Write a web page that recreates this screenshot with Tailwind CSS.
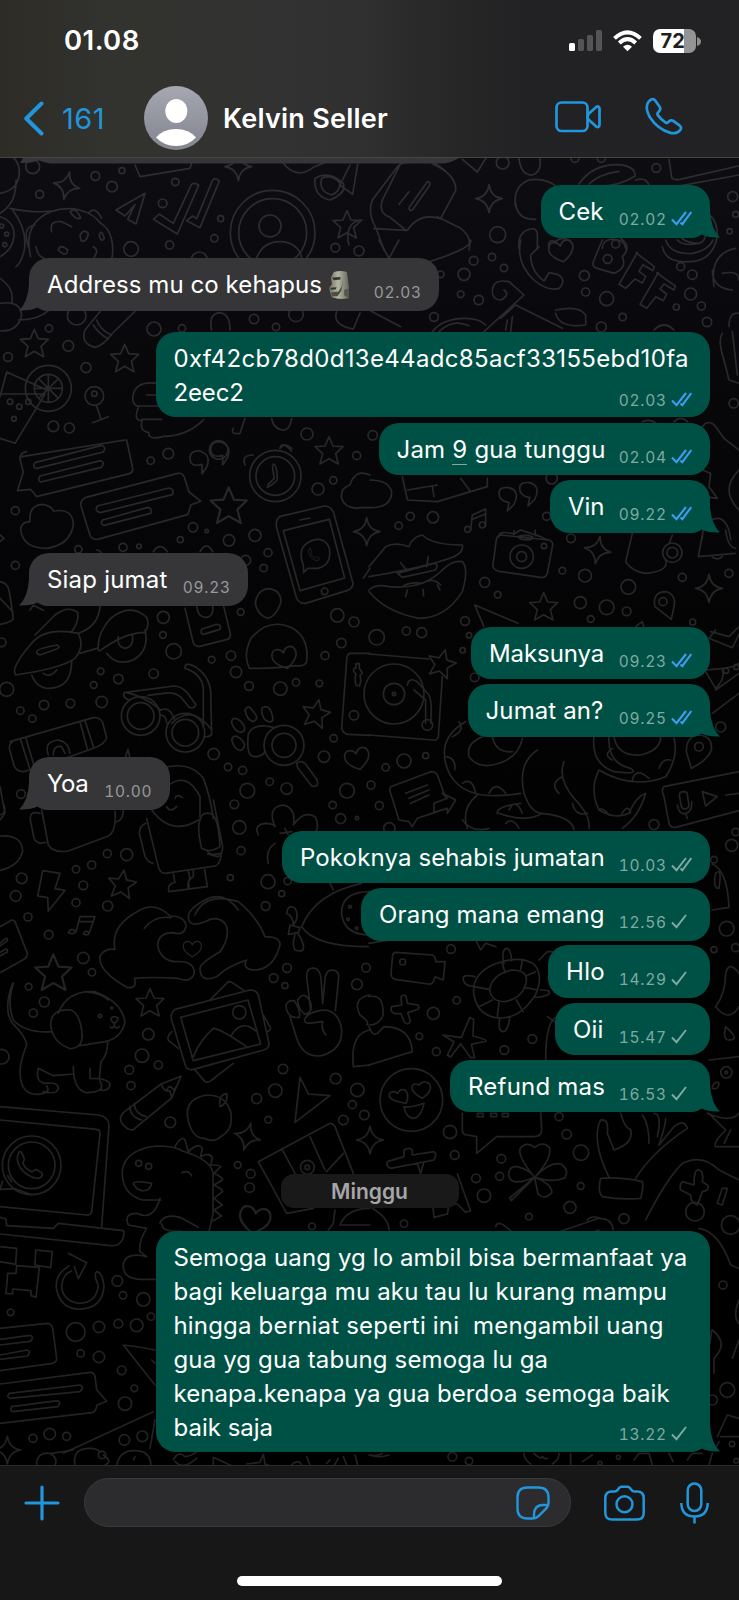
<!DOCTYPE html>
<html lang="id">
<head>
<meta charset="utf-8">
<title>Kelvin Seller</title>
<script src="https://cdn.jsdelivr.net/npm/@tailwindcss/browser@4"></script>
</head>
<body class="bg-black">
<div class="relative flex flex-col w-[739px] h-[1600px] overflow-hidden font-['Inter',sans-serif] bg-gradient-to-b from-[#111117] via-[#060608] via-30% to-black text-white">

<!-- doodle wallpaper -->
<svg class="absolute inset-0 w-[739px] h-[1600px] opacity-[.135]" viewBox="0 0 739 1600" fill="none" stroke="#fff" stroke-width="5" stroke-linecap="round" stroke-linejoin="round">
<defs>
<path id="st" d="M0-42 12-14 42-12 20 9 28 40 0 24-27 40-19 9-42-12-12-14z"/>
<path id="sp" d="M0-42Q5-5 40 0Q6 5 0 42Q-5 6-40 0Q-5-5 0-42z"/>
<path id="ht" d="M0 34C-28 18-40 4-36-14C-31-34-8-32 0-14C8-32 31-34 36-14C40 4 28 18 0 34z"/>
<path id="ph" d="M-32-38c-14 26 6 66 48 78c12 3 22-6 18-15l-16-11c-8 0-9 6-13 6c-14-6-22-16-26-28c0-5 6-6 5-14l-6-17c-3-6-8-5-10 1z"/>
</defs>
<g transform="translate(369 0) scale(.33333)">
<path d="M-60 735C-70 700-60 660-20 660M10 600l75-100q12-14 30-12l60-12q90 50 85 95l-45 85q-65-20-100 35l-100-5M10 600q-15 40 10 82l25 68M95 490l-55 110q-12 40 20 50l50 40M190 492q70 30 70 75M205 650l70 35q35 25 25 65M175 545q12 0 6 12l-50 72q-12 8-10-8zM120 575l-30 38M280 478l45 38 28-45M450 475q5 50 40 50 30-10 22-52M440 620q-10-60 40-80 50-8 85 22M440 610q5 50 60 48M450 745q-5-50 35-58 20-5 20 20v40M540 745q-5-30 20-20 20-20 45 0M630 552q40-60 120-58 50 5 48 35-50 30-110 30M660 552q30-30 90-38M800 540q30-10 40 15M900 478l8 55q5 8 25 5l175-40M920 560l190-35M880 740q10 50 80 45 70 0 85-75 0-50-25-65M930 700q10 30 60 30 20-5 20-30M700 745q0-25 30-28 35 0 40 28"/>
<use href="#sp" x="360" y="596"/>
</g>
<g transform="translate(0 150) scale(.33333)">
<path d="M0 130q60-10 58-70-5-30-20-38M0 190q50-30 48-100M30 175q70 15 125 8M0 200q45 15 42 60-5 40-42 60M38 180q45 60 35 120-10 40-25 50M92 320c-15-60 0-110 60-135c60-20 120-5 150 35c35 20 40 70 34 104M155 245q-8-35 30-30l30 15M210 185q20-15 32 20-15 5-32-20M265 190q20-25 40 15M85 290q-20-60 20-65M175 300q5-20 28 0-3 25-28 0M240 255q10-20 25-5-5 30-22 22zM298 255q5-20 15 10-10 15-15-10M108 290q5 30 25 35M280 290q20 10 0 35M435 130 348 180l27 18 30-34-22 44 25 14zM460 208l18-16 42 28 54-116q10-8 22 2l-64 146zM560 212l18-14 12 8 48-116q8-8 20 3l-58 140zM770 323q20-50 75-48 50 5 60 48M405 45l15 35 150-25 5-15M850 40q40 50 90 12l30-12M945 85q40-25 85 15 10 30-40 50-50-10-45-65M965 85q30-15 55 15 0 25-25 35-40-10-30-50M1050 45l-30 60 38 28 15-90M0 385q45 30 35 75M0 460q60-10 65 35-10 50-65 48M55 510q60 0 90-28M300 485l-45 55q-15 40 30 52 25-5 50-40l70-68M290 510q10 30 45 45M280 525q15 25 45 42M0 740l20-74 115 52M0 732h135L45 880 0 865M290 768l13 40M278 818l47-18M475 700q-75-10-77 45 0 20 18 25-18 42 10 42-8 32 20 35-2 25 45 12 70 0 120-50M415 768h65M425 808h60M440 735h40M635 540q-10-45 20-52 35 0 35 52M700 835q-10 20 20 15l15-45M815 805q5 35 40 35 15-5 20-35M1010 485q-15 40 50 52l20-48M840 895q15-20 35 0M145 675v80M105 715h80M118 688l55 55M173 688l-55 55"/>
<circle cx="818" cy="248" r="127"/><circle cx="818" cy="248" r="102"/><circle cx="145" cy="715" r="69"/><circle cx="145" cy="715" r="42"/>
<use href="#sp" x="200" y="107" transform="rotate(12 200 107)"/><use href="#sp" x="715" y="50"/><use href="#st" x="1041" y="224"/><use href="#st" x="103" y="580"/><use href="#st" x="374" y="625"/>
</g>
<g transform="translate(369 240) scale(.33333)">
<path d="M30 0l30 55 30-55M305 0q5 20-80 50l-45 15M455 0q-15 70 40 120 40 35 75 25 25-25-5-42l-25-5-15 25q-40-30-40-78l25-25M700 0l-25 60q-10 20 10 25l50 15q40-15 25-50 30-30-5-55M805 38l-55 95 20 12 28-28 22 12 10-20-20-15 12-20 30 18 4-12-40-30q-8-8-15-12zM868 98l-55 95 20 12 28-35 22 12 10-20-20-15 12-15 30 18 4-12-40-28q-8-8-15-12zM370 155q0-40 50-30l45 40L345 275M370 160q5 20 25 20 30-15 10-30M395 235l45-40 140 70M430 230l-5 45M415 240l-5 30M560 210q70-15 90 15v30q-80 10-90-35M190 275q30-40 100-40 40 0 60 20M210 275q40-40 90-18M0 210l95 50M1035 140q-15-100 65-115M1030 90q0 55 60 60M1060 100q50-10 50 20M1060 280q-15 20 5 80l15 60 30 10M1090 275l15 130M1080 260q0-45 30-40M100 710l15 70 90 5 150-45v-25M115 750l90-15M275 715l30 40M190 740l5 30M390 760q0-20 30-17 35 10 15 50l-20 20 5-25q-30-5-30-28M452 745q0-20 30-17 35 10 15 50l-20 20 5-25q-30-5-30-28M305 870l5-45 40-18 0 50M310 838l38-15M1000 560q20-25 40 0l25 35 45 35M1000 690l25 10-5 40 25 35-40-5M1110 690q-60 60 0 120M1000 895q0-60 50-60 30 10 35 65M390 890q0-20 45-8l20-12 60 20 20 10"/>
<circle cx="716" cy="57" r="13"/><circle cx="740" cy="12" r="12"/><circle cx="296" cy="868" r="9"/><circle cx="340" cy="855" r="9"/>
<path d="M890 0q15 45 80 40 50-10 62-40M925 0q20 20 60 10M820 545q25-10 40 5M915 545q20-20 40 0M855 270q30-30 60 0"/>
<use href="#ht" x="577" y="32" transform="rotate(-12 577 32)"/>
</g>
<g transform="translate(0 440) scale(.33333)">
<path d="M65 50l310-50M380 0l18 85q2 12-10 16L110 170l-18-22-40 4 18-55-10-40q0-20 20-22M105 68l200-52q15 5 5 20L108 86q-12-6-3-18M120 108l182-46q14 5 2 20l-182 44q-10-6-2-18M258 172l275-72q15-2 20 12l14 44 36 28-30 10-10 30-270 74q-18 3-24-15l-26-85q-3-18 15-26M292 198l215-54q18 4 10 20l-216 54q-18-4-9-20M308 240l136-38q14 4 8 18l-140 36q-14-4-4-16M90 245q-5-50 38-52 28 5 32 20 60-10 60 42-10 60-80 70-75 0-78-60 5-20 28-20M570 55q0-25 30-22 35 12 20 48l-14 20 0-28q-36 10-36-18M632 28q0-25 30-22 35 12 20 48l-14 20 0-28q-36 10-36-18M838 230l135-32q20 0 28 20l58 212q0 15-18 22l-125 38q-20 2-27-18l-60-212q-2-20 9-30M850 272l138-34 46 176-134 38zM900 240l30-6M910 375q-20-50 18-70 45-20 60 20 8 50-35 60l-30 0-12 13zM735 75q-12-30 25-30M840 25q5-25 35 8M820 72q10 0 12 42 3 10-30 28M818 75q-2 5 5 40l-20 20M1110 105q-45-20-60 30-30 10-25 40 10 35 60 28h25q65 0 65-48-10-35-65-35M0 285l12 10-12 10M0 425q25 5 28 30l12 80q-5 12-40 18M0 475l38 40M460 335q20-30 42 0M600 335q20-35 38 0M290 330q10 0 15 12M90 510l10-14 30 15M45 700q-10-20 50-90 40-50 140-30 20 40-10 75-40 30-180 50M110 635q0-8 60-20 15 5 0 12l-50 18q-10-2-10-10M105 585l60-60q40-30 68-8 5 30-20 60M235 580q60-20 65-80M240 640l50-15M295 632q-5-50 35-95 60-50 110-5 10 25-5 45-60 0-135 55M95 705q20 50 70 38 50-10 50-80M130 700q20 15 40-10M320 640q30 40 80 20 50-30 35-90M355 590q-5 30 20 35 28-5 22-40M555 505l24 100q3 15 20 14l80-20q13-2 12-18l-20-82M590 500q5 35 30 32 22-5 18-32M605 568l45-15q15 0 10 15l-50 15q-10 0-5-15M766 490q5-40 40-44 40 5 36 44-15 40-38 45-32-10-38-45M748 685q-20-40 5-90 55-65 125-30 50 30 42 100-5 15-35 12-60 10-137 8M372 758l150-20q20 0 40 20l25 35q0 12-18 10l-25-30q-20-20-60-12l-40 5M372 758q-5 15 15 22M380 758q50 10 100 50M478 812q20-12 35 5l10 20M480 825q20 0 20 25M555 682q0-15 25-5 45 25 52 75l3 130q-5 10-20 8M555 685q50 15 55 60v115M515 850q60-60 120 20M30 905l250-72q20-3 28 15l12 45q-5 20-40 32l-140 50-70 20q-20 0-28-18l-14-52q0-15 10-20M62 900l28 88M78 895l25 85M240 845l22 82M255 842l26 80M145 945q-15-40 30-45 30 5 35 40M160 945q0-30 25-25l10 20M377 950l7-22 5 22M695 850q0-25 25-8 25 25 5 35-20 0-30-27M735 810q10-20 25 5 20 20 0 30-20-5-25-35M785 805q20-15 30 15 10 30-10 25-20-5-20-40M695 900q5-20 25-5 25 20 5 35-20 5-30-30M820 862q-60-15-75 20-8 70 20 68 20 0 30-15M890 970q10-10 25 0l35 48q10 25-15 20l-42-55zM1110 640l-60 0q-10 5-10 20l-15 205q5 18 20 18l65 3M1068 735q-5-20 0-32-15-15 0-20v-12h10v15q15 15 2 20 5 20-2 32zM1090 415l20-30M480 985q90-25 130 30 20 50 30 120M500 1040q60-50 100 30v60M500 1100q10 20 30 0M525 1075q5-15 22-2M0 1040l15 80-15 20"/>
<circle cx="826" cy="108" r="77"/><circle cx="826" cy="108" r="58"/><circle cx="422" cy="828" r="58"/><circle cx="422" cy="828" r="40"/><circle cx="556" cy="878" r="58"/><circle cx="556" cy="878" r="40"/><circle cx="852" cy="916" r="60"/><circle cx="852" cy="916" r="36"/>
<use href="#ph" transform="translate(942 344) scale(.45)"/>
<use href="#st" x="987" y="32"/><use href="#st" transform="translate(686 197) scale(1.3)"/><use href="#st" x="948" y="820" transform="rotate(12 948 820)"/><use href="#sp" x="1100" y="275"/><use href="#ht" x="854" y="652" transform="rotate(-14 854 652)"/><use href="#ht" x="1072" y="955" transform="rotate(-14 1072 955)"/>
</g>
<g transform="translate(369 530) scale(.33333)">
<path d="M0 110l50-60q30-15 70 0 10-30 40-35 30 30 120 30 5 20-25 35-80 30-255 60M0 180q20-20 60-10 100 10 160-50 30-30 60-25 20 20 0 90-50 80-130 80-100-20-150-80M85 130l110-30q15 0 5 20l-100 22zM100 170q20-15 60-10 30-20 55 5M95 98l20 25M178 80l-5 30M115 180l-5 20M162 178l2 20M205 165l8 15M395 15l145 15q15 5 10 20l-15 80q-5 15-20 12l-125-18q-20-5-18-20l10-75q3-14 13-14M435 12v-10M500 18l-2-18M450 18q25-5 40 2 5 12-30 8-15-3-10-10M790 10l-20 85q20 30 60 35 70-5 60-40M910 15l-8 22M1000 15l-12 65 110-10M1070 0q5 50 30 55M1030 82q20 10 30-3M858 230q-10-45 35-45 30 10 22 45l-8 38zM345 290l-28-65 130 55M1040 300l-20 25 70 28 20-40M1025 305l55 15 30-30M800 290l20-15 5 15M0 372l180 15M220 440l-12 180q-3 12-15 10L0 615M115 465q5-25 30-10l35 40q10 20 5 85M135 480l35 30v70M1010 420q90-5 100-20M1010 425l30 50q30-30 20-55M1040 480l70-50M1030 550l80-60M230 700q-20-80 60-125M230 700q20 80 110 95 60 5 115-5M300 680q-10-40 40-60M300 680q30 40 90 20 60-20 70-75M370 620q10 50 60 45M250 620q40-20 20-45M232 680q30 5 25 40M280 760q30-20 40 30M360 790q20-40 50 0M505 660q-60 40-40 130 20 60 55 60 90 10 95 50M585 695q-20 50 30 110 50 50 45 90M580 740q-40 20-10 50M610 820q10 40 45 30M675 620q-10 80 60 105 80 10 50-10-70-15-65-95M690 720q100 60 200 20 40-60 25-115M730 655q-30 20 0 35M790 750q10-40 50-5M870 715q10-30 35-25M735 620q10 60 80 55 60-15 60-55M690 720q-30 60 0 120 50 30 90 10 20-50 50-60-20 70-70 105M690 840q10-10 30 15M755 858q20-40 30-10M325 795q-50 40-30 100M390 850q80 30 130 0M385 850q-5-20 70-30M420 840q20-40 40 10M410 880q20-20 40 15M952 665q0-50 40-50 40 5 35 45-10 30-60 55zM885 770l225-45M885 770q-10 10 0 30l15 80q5 15 20 12l190-50M932 800q-3-15 10-15 15 0 13 10l5 30q0 10-12 12-10 0-12-12zM925 825q5 30 25 25 20-5 18-35M950 850l5 15M1000 785l45 15-35 28zM1070 795l40-5M65 770l120-45q15 0 20 10l20 55M65 770q-5 10 0 20l25 80 30 5 10 15 15-25 60-20M110 790l65-25M120 805l60-25M125 820l55-25M195 820l40-15-15-15 40 20-25 40v-15l-40 12z"/>
<circle cx="458" cy="80" r="35"/><circle cx="458" cy="80" r="15"/><circle cx="525" cy="48" r="8"/><circle cx="910" cy="68" r="29"/><circle cx="910" cy="68" r="16"/><circle cx="75" cy="492" r="90"/><circle cx="75" cy="492" r="32"/><circle cx="75" cy="492" r="5"/><circle cx="175" cy="585" r="16"/>
<use href="#st" x="524" y="230"/><use href="#st" x="218" y="400" transform="rotate(15 218 400)"/><use href="#sp" x="686" y="60" transform="rotate(10 686 60)"/><use href="#sp" x="1020" y="175"/>
</g>
<g transform="translate(0 800) scale(.33333)">
<path d="M0 108q65-5 68 45-10 45-68 58M125 30l20 105q15 25 60 18l120-45q25-15 20-75M120 40q-35-10-28 25l10 50q10 20 35 12M370 30q0 30-20 35M0 45q20-5 12-30M455 30q60 80 140 30M440 55l35 145q5 20 20 20l150-22q15-5 18-30M437 70q-22 10-18 35l15 60q5 20 25 25M640 0l28 140q0 25-15 30l-30-8M600 60q5-25 30-20 25 5 30 100-30 20-55 5-15-60-5-85M620 150q10 20 40 10M520 222l5 25q-25 5-18 28l115-15-8-52M565 215l5 20q-10 15-5 28M580 210v20q-20 10-12 30M128 212l52 8-15 46 30 5-50 62-2-40-30-5zM205 398q10-18 22-3-8 10-22 3M250 402q8-16 18-2-6 8-18 2M228 395l12-45 45 0-18 50M236 365l42 0M0 380l35-20q10 0 12 10l35 90q0 12-10 18L0 518M0 430q25-25 22-8L0 438M0 458q25-20 22-2L0 468M345 448q-15-70 70-115 50-30 95 15 45 0 48 30-5 30-40 20-40 0-45 35 5 45 50 52 60-5 60 35-10 30-50 15-80-5-130 0 10 30-20 28-90-50-83-95 15-25 45-20M433 385q30-40 80-32M585 345q30-70 130-40 60 50 80 105 60 0 40 40-20 60-75 60-35-5-20-30-60 20-90 50-50 20-50-25 0-15 60-50 35-50 15-85-25-25-60-5-50 20-50-15 0-25 60-55 50-20 90 35M775 105q-15-30 20-35 25 0 30 10-25-60 25-65 40 10 30 60 30-45 65-25 15 30 0 50M805 190q-10-40 20-60M840 100l35-5M855 85l10 20M1000 270l-10-20M905 380q40-100 180-130M905 380q40 60 200 60M1110 275q-90 0-85 70 10 60 85 60M860 340q5-30 25-15 15 25-5 50 0-25-20-35M870 375l30 8-5 15-30 5zM885 405q-10 30 0 45 30 10 25-15-5-20-15-32M40 550q-20 60 0 110 35 40 115 35M38 550q-30 80 0 120 40 40 42 65-20 50-20 80 0 70 55 68 40-5 25-25M115 805q-10 40 20 45 40-5 40 15-5 20-45 10M115 805l45 22 62-5M220 800q0 70 40 78 60 0 40-35M270 805v30q60 0 60 20-5 20-30 15M323 725q0 40-20 60l-5 50M175 640q25-70 110-65 80 30 90 90-10 50-60 60l-75 12M255 575q50 5 70 25M152 675q0-50 60-45 30 10 35 80-5 40-40 35-50-20-55-70M333 655q10-10 22 0-3 10-12 15-10-5-10-15M343 670v10q-10 8-12 0M343 680q10 8 15 0M525 628l225-58q20 0 25 15l32 145q0 15-15 20L580 808q-20 5-25-15L515 660q-5-20 10-32M542 652l202-52 38 132-202 50zM580 770q20-50 60-85 20 0 100 55M695 705q30-50 75-10M630 600l55-55q10 0 15 5l30 20M790 645l22 40q0 5-12 12M515 695q-20 20-5 30l25 20M585 810l30 35q10 5 20-5l65-50M932 630l-12-100q0-30 25-25 15 5 18 30l5 75 8-80q5-25 30-18 12 8 10 20l-10 100M858 620q0-20 25-18 20 30 15 50-35 5-40-32M893 600q20-30 38 5 10 30-15 38-20-10-23-43M870 650l20 65q20 60 75 52 70-20 58-90-20-70-95-35-25 20-5 28l45-5q-5 25 10 40M483 852l60-23-28 65-115 95q-15 5-35-20-10-20 10-35zM485 855q5 20 25 18l5 20M403 910q0 30 35 40M390 920q0 30 35 40M500 870q10-20 20 0 10-10 12-15M660 915q-5-30 20-35 5 30-20 40M620 885q-60 10-58 60 10 70 50 70 30 15 50-5 40-20 30-75-15-50-72-50M900 832l-15 135 105-80-65-5zM0 920l295 25q30 5 32 30l-22 305M0 960l290 28q10 2 10 12l-25 235M0 1168l8-25M0 1168l45-2 50 18M35 1145l-12-18M367 1110q10-60 100-72 60 0 80 15 100 30 92 80v110l-12 50M367 1110q-5 70 60 90h55M400 1150q5-10 55 0-5 25-30 22-20-5-25-22M545 1118q20-10 30 10M525 1040q20-35 30-20l10 35q30-30 42-10l-5 25q30-15 35 5l-5 20q30 0 30 5l-20 20q30 15 25 20l-25 15q30 15 25 20l-25 20 25 20-25 15 22 18-25 15M775 1085l215-115q10 0 15 10l55 140M775 1085l85 155M845 1045l40 75M930 1010l45 100M1030 1060l-50 55M1110 585q-55 10-30 60 30 20 20 30M1110 690q-60 10-50 110l50-5"/>
<circle cx="300" cy="648" r="5"/><circle cx="335" cy="624" r="3"/><circle cx="718" cy="637" r="20"/><circle cx="95" cy="1096" r="88"/><circle cx="95" cy="1096" r="70"/><circle cx="416" cy="1090" r="9"/><circle cx="446" cy="1099" r="9"/><circle cx="922" cy="1102" r="21"/><circle cx="922" cy="1102" r="7"/>
<use href="#ph" transform="translate(90 1096) rotate(-4)"/>
<use href="#ht" transform="translate(577 445) scale(.75)"/><use href="#st" x="366" y="252" transform="rotate(8 366 252)"/><use href="#st" transform="translate(160 518) scale(1.3)"/><use href="#st" x="450" y="608"/><use href="#sp" x="742" y="1010" transform="rotate(15 742 1010)"/><use href="#sp" x="1110" y="1020"/>
</g>
<g transform="translate(369 820) scale(.33333)">
<path d="M280 0q30 40 80 25M0 370l70-12M320 360l15 30 15-20 30 10M80 397l110 8q10 3 10 20l28 0-5 55-25-10q-5 25-20 22L78 478q-12-3-12-18l5-55q2-8 9-8M315 525q-10-60 60-92 80-30 120 0 30 30 5 90-50 80-120 70-55-10-65-68M362 510q5-45 65-60 50 0 45 35-10 50-65 60-40 0-45-35M405 430q-10-40 8-45 12 0 15 38M318 470q-40-10-35 10 5 20 32 18M510 420l25-25h15M515 510q40 0 20 15-25 10-40 5M392 595q-5 40 10 40 15 0 20-42M400 430l8 28M460 420l-5 28M500 455l-28 12M505 510l-40-8M462 575l-20-35M385 590l5-45M330 560l40-20M315 500l45 8M68 560l30-5-2-25q10-10 15 0l5 20 30 5q10 10-5 15l-25 8 8 25q-5 15-18 3l-10-25-20 0q-15-10-8-21M222 645l55 8 25-60 12 5-2 50q40 10 40 15l-45 10 10 40-12 0-30-42-30 40-10-5 20-40zM0 530q45-10 42 55-10 30-42 30M0 620q10 30 25 20l20-20q80 0 85 75L0 735M105 860q15 5 60-10-10 45-35 45-20-5-25-35M62 820q-10 20 50 30 10-30-5-40-15-5-20 10-15-10-25 0M130 810q-5-25 20-15 10-15 30-5 15 20-20 45-20-10-30-25M280 880v50q0 15 15 15l28 5v50l60-50h110q25 0 25-20l-3-55M325 880h18v10h-18zM365 880h18v10h-18zM400 880h18v10h-18zM55 1025l50-15 0-20q15-10 25 0v15l65-10q10 5 0 25L65 1045q-15-5-10-20M145 1030l10 32M165 1025l-10 35M265 1062l40 110-15 5-25-25-25 0-5 30-40 10-5-50M530 720q0-130 40-130M535 590l30 20M695 900q25-5 20 40l20 50q60-20 50-60-20-10-30-50M695 900q-30 60 25 172M800 1075q50-80 155-150-10-30-40-5l-45 55q20-60 20-80M840 970q0-60-20-85M855 880q25 0 10 70M695 1075q60-5 125 10 5 10-5 50-60 5-115-5-15-15-5-55M830 1200q60-120 110-170 60-30 110 20l60 30M940 1085l35 10q0-50 15-45 15 5 10 35l15 10q10 15-15 20l-15 40q-20-5-20-30l-30-15q-5-15 5-25M1060 1105l15 0-15 50-15-5zM1030 270l50-8q-5-110-50-130M1040 160q20-20 10 45-20 0-10-45M1110 460q-30-40-40 0 0 60-30 100 40 50 70 0M1070 620q-10 40 10 40 25 0 10-20zM1020 720l90-10M1030 800q10-20 20-10 0 20-20 15M1015 880q70 30 95 0M1020 880l50 50q-40 40-30 50l70 0M1085 930l-20 40"/>
<path d="M497 1072q-50-60-44-85 18-25 44-5 25-20 44 0 10 30-44 90q45-48 80-40 25 20 10 42-35 15-90-2q50 20 52 45-20 25-42 5-5-25-10-50l-70 70-5-8 75-62q-70 30-78-5 0-30 25-27 40 10 53 32"/>
<circle cx="101" cy="426" r="9"/><circle cx="127" cy="840" r="94"/><circle cx="1072" cy="757" r="17"/><circle cx="1072" cy="757" r="4"/><circle cx="978" cy="1175" r="28"/>
</g>
<g transform="translate(0 1100) scale(.33333)">
<path d="M275 335q-3 12-15 10L0 320M0 352l18 5 2 20 140 8 15-15 195 22q5 5-2 25-10 22-35 20L0 402M0 440l50 5-3 48-47-8M107 450l50 5-5 48-47-8zM50 497l68 5-10 90-15-5 0-15-55-5v15l-20-2 5-60 25 0zM205 460l55 28-25 48-12-36M207 498q-45 25-37 72 15 62 77 57 60-5 65-67-5-45-22-45-10 10 5 40-5 55-60 55-50-10-50-55 5-35 30-42M0 685l140-15q15 0 18 15l12 90q0 12-12 15L0 812M0 718l90-12q15 5 0 18L0 735M0 765l82-15q12 5 0 18L0 778M0 852l270-35q12 0 15 12l5 40 30 35-30 12q0 18-15 22L0 970M28 880l212-25q15 5 0 20L30 895q-12-5-2-15M35 920l138-18q12 5 0 18L38 935q-10-5-3-15M480 295q-20 70-70 45-40 0-25 35l55 10q-25 40-20 70l20 15q-60-15-70 20-5 45 50 48l45 0M480 370q10-30 60-18l55 30M485 372q0 25 60 22M370 735q50 5 95 15M370 735l95 120M455 780l10 10M190 1060l270-125M465 960l-15 85M860 340l80-15M1020 375q20-50 90-50M1005 330l-5 40-15 20M1020 375h90"/>
<use href="#ht" transform="translate(764 358) rotate(10) scale(1.25)"/>
<use href="#sp" x="22" y="1050"/>
</g>
<g transform="translate(369 1160) scale(.33333)">
<path d="M10 145q50 30 50 65M380 200q5-20 30 0l15 12M570 215l120-40q40 0 42 35M655 180q10-15 40-5M675 215l15-5M990 205q60 10 95 110l25 10M1110 420q-20 50 0 70M1030 510q50 40 5 85l0 45M1110 540l-20 55M1028 510l-5 40M1045 830l30-65 35 10M1055 830h55M1025 870q20-10 25-25M0 885q30 10 60 0"/>
</g>
<g transform="translate(0 1450) scale(.33333)">
<path d="M110 45q0-40 40-35 25 15 15 35M155 10l65-10M225 45q-10-50 45-50 20 0 30 10M310 15q30 20 5 30M350 45q10-45 55-43 45 0 48 43M400 30l5-10M520 30q15-30 35-10 15 0 35-15M525 35q20 20 45 5l20-15M640 25l0 20M640 22l55 25M740 42l40-5 10-25 5 30 15 5M875 45q20-20 30 0M920 20l10 25M990 30l-10 10M1015 25l-12 20M1030 20l10 25M1065 15l8 30"/>
</g>
<g transform="translate(369 1450) scale(.33333)">
<path d="M5 15q20 5 35-5M465 10q0 20 20 32M570 10q0 20-20 32M495 10q20 20 25 10 10 10 15 5M605 10v35M670 15l-30 20M795 30l15-20 30 0M900 10l12 25M955 30l15-20 30 0M1030 10l-10 35M840 10l10 35"/>
</g>
<g id="dots"></g>
</svg>

<!-- header -->
<header class="relative flex flex-col w-full h-[158px] border-b border-[#454546] bg-[#222224] bg-[linear-gradient(90deg,#2d2c27_0%,#32322e_14%,#323232_38%,#303030_48%,#262627_62%,#222224_72%)]">
  <div class="flex items-center h-[82px] pl-[64px] pr-[38px] justify-between">
    <span class="text-[27.5px] font-semibold leading-none tracking-[.45px]">01.08</span>
    <div class="flex items-center">
      <svg class="w-[34px] h-[22px]" viewBox="0 0 34 22"><rect x="1" y="13" width="6" height="8" rx="1.6" fill="#fff"/><g fill="#545456"><rect x="10" y="9" width="6" height="12" rx="1.6"/><rect x="19" y="5" width="6" height="16" rx="1.6"/><rect x="28" y="0" width="6" height="21" rx="1.6"/></g></svg>
      <svg class="w-[29px] h-[22px] ml-[11px]" viewBox="0 0 29 22" fill="none" stroke="#fff" stroke-width="4"><path d="M1.5 8.4Q14.5-3.8 27.5 8.4"/><path d="M6.3 13Q14.5 5.3 22.7 13"/><path d="M14.5 21.3L10 16.8Q14.5 12.8 19 16.800z" fill="#fff" stroke="none"/></svg>
      <div class="flex items-center w-[43px] h-[24px] ml-[11px] pl-[7.5px] rounded-[7px] bg-[linear-gradient(90deg,#fff_73%,#949495_73%)]"><span class="text-[20px] font-bold leading-none text-[#1f1f21]">72</span></div>
      <svg class="w-[4px] h-[9px] ml-[1px]" viewBox="0 0 4 9"><path d="M0 0Q4 1.500 4 4.500Q4 7.500 0 9z" fill="#8d8d8e"/></svg>
    </div>
  </div>
  <div class="flex items-center h-[72px] pl-[23px]">
    <svg class="w-[22px] h-[35px]" viewBox="0 0 22 35" fill="none" stroke="#2196db" stroke-width="4" stroke-linecap="round" stroke-linejoin="round"><path d="M18.500 2.500L3.300 17.500L18.500 32.500"/></svg>
    <span class="ml-[17px] w-[45px] text-[29px] tracking-[.5px] leading-none text-[#2196db]">161</span>
    <svg class="w-[64px] h-[64px] ml-[37px]" viewBox="0 0 64 64"><defs><linearGradient id="av" x2="0" y2="1"><stop stop-color="#a5a7b1"/><stop offset="1" stop-color="#82848f"/></linearGradient></defs><circle cx="32" cy="32" r="32" fill="url(#av)"/><ellipse cx="32.300" cy="25" rx="11" ry="12" fill="#fff"/><path d="M12 51.500Q19 43 32 43Q45 43 52 51.500Q44 60 32 60Q20 60 12 51.500z" fill="#fff"/></svg>
    <span class="ml-[15px] w-[300px] text-[27px] tracking-[.25px] font-semibold leading-none whitespace-nowrap">Kelvin Seller</span>
    <svg class="w-[46px] h-[32px] ml-[32px] -mt-[3px] shrink-0" viewBox="0 0 46 32" fill="none" stroke="#2196db" stroke-width="2.700" stroke-linejoin="round"><rect x="1.500" y="1.500" width="31" height="28.500" rx="5"/><path d="M32.500 15.700Q33 13.500 34 12.500L41.500 5.800Q44.300 4.500 44.500 7.500V24Q44.300 27 41.500 25.800L34 19Q32.800 18 32.500 15.700z"/></svg>
    <svg class="w-[38px] h-[38px] ml-[44px] -mt-[4px] shrink-0" viewBox="0 0 38 38" fill="none" stroke="#2196db" stroke-width="2.700" stroke-linejoin="round"><path d="M3.500 4.800C5.500 2.500 8 1 10 3.200L14.800 10Q16 12 14.300 14L12.800 15.800Q12 17 13 18.400Q16 22.500 20.500 25.500Q21.800 26.300 22.800 25.400L24.500 23.900Q26.200 22.700 28.200 23.900L34.800 28.700Q37.200 30.600 35 33.300Q31.500 37.300 25.500 35.900Q13 32.500 5 20.500Q-.5 10.500 3.500 4.800z"/></svg>
  </div>
</header>

<!-- messages -->
<main class="relative flex flex-col w-full h-[1307px] px-[29px] overflow-hidden text-[24px] leading-[34px]" id="chat">
  <svg class="w-[440px] h-[5.500px] -ml-[9px] shrink-0" viewBox="0 0 440 5.500" fill="#363638"><path d="M3 0H439Q430 5.500 420 5.500H30Q24 4.500 19 2.500Q10 5.500 0 5z"/></svg>
</main>

<!-- composer -->
<footer class="relative flex flex-col w-full h-[135px] border-t border-[#2b2b2c] bg-[#171717] items-center">
  <div class="flex items-center w-full h-[73px] pl-[24px]">
    <svg class="w-[36px] h-[36px]" viewBox="0 0 36 36" stroke="#2196db" stroke-width="3.200" stroke-linecap="round"><path d="M18 2V34M2 18H34"/></svg>
    <div class="flex items-center justify-end w-[487px] h-[49px] ml-[24px] pr-[20px] rounded-full border border-[#3a3a3c] bg-[#2c2c2e]">
      <svg class="w-[34px] h-[34px]" viewBox="0 0 34 34" fill="none" stroke="#2196db" stroke-width="2.400" stroke-linejoin="round"><path d="M11.500 1.500H22.500Q32.500 1.500 32.500 11.500V17Q32.500 20 30.500 22.200L22.500 30.200Q20.300 32.500 17 32.500H11.500Q1.500 32.500 1.500 22.500V11.500Q1.500 1.500 11.500 1.500zM18 32.300V28Q18.500 19.500 26 19H32.300"/></svg>
    </div>
    <svg class="w-[41px] h-[36px] ml-[33px]" viewBox="0 0 41 36" fill="none" stroke="#2196db" stroke-width="2.500" stroke-linejoin="round"><path d="M8 6.500H10.500Q12.500 6.500 13.700 4.800Q15.500 1.800 17.500 1.800H23.500Q25.500 1.800 27.300 4.800Q28.500 6.500 30.500 6.500H33Q39.700 6.500 39.700 13V28Q39.700 34.500 33 34.500H8Q1.300 34.500 1.300 28V13Q1.300 6.500 8 6.500z"/><circle cx="20.500" cy="19.300" r="8"/></svg>
    <svg class="w-[29px] h-[42px] ml-[35px]" viewBox="0 0 29 42" fill="none" stroke="#2196db" stroke-width="2.500"><rect x="7.700" y="1.500" width="13.600" height="27.500" rx="6.800"/><path d="M1.300 21Q1.500 34.500 14.500 34.500Q27.500 34.500 27.700 21M14.500 34.500V41.500"/></svg>
  </div>
  <div class="w-[265px] h-[10px] mt-[37px] rounded-full bg-white"></div>
</footer>
</div>

<script>
// small circles scattered over the wallpaper: [originX, originY, "x,y,r ..."]
const dots = [
 [369,0,"401,488,19 862,504,13 386,704,24 1091,590,15 1082,694,8 1100,643,9 618,475,12 697,475,12"],
 [0,150,"98,50,21 286,78,13 366,62,9 336,110,16 119,133,12 526,96,11 488,160,13 662,206,9 643,265,11 509,285,12 393,297,22 810,228,33 1006,293,13 1077,303,15 230,497,28 462,537,21 546,535,11 147,535,11 205,588,16 24,621,13 258,653,15 762,507,14 888,493,22 828,531,11 160,829,16 208,834,15 921,852,18 283,738,28 283,731,8 598,330,24 656,900,28 30,755,8 58,770,8 85,755,8 42,806,7 5,228,6 20,252,6 14,284,6"],
 [369,240,"314,62,13 369,51,11 405,84,11 285,103,18 215,103,10 275,163,10 329,180,14 195,231,13 646,107,15 650,156,12 713,176,21 935,80,12 970,104,14 965,162,18 997,198,12 922,201,9 761,231,11 1014,246,14 697,261,15 1094,490,14 11,586,14 124,829,12 192,832,17 89,857,11 533,829,12 548,715,17"],
 [0,440,"452,62,11 505,41,16 1070,47,12 1000,121,11 954,147,18 46,212,12 579,262,14 620,273,5 541,299,9 687,301,17 765,286,18 804,338,12 791,384,11 737,361,15 369,322,12 417,319,7 235,328,11 46,376,12 722,516,10 490,532,18 489,585,10 521,634,23 635,659,10 693,647,14 708,696,17 747,738,13 841,746,20 888,727,11 958,730,10 975,647,12 1024,609,14 1062,546,15 1012,526,20 974,454,10 302,694,10 355,717,14 281,735,10 461,701,14 305,786,17 211,790,13 132,795,14 61,812,11 97,836,11 20,748,21 5,607,13 641,942,17 684,981,11 728,991,12 809,1025,11 860,1046,17 742,1052,22 972,950,17 1001,895,11 1062,826,14 63,1062,13 1041,1052,22"],
 [369,530,"606,25,13 580,122,10 648,137,19 778,171,22 940,142,12 1080,130,12 882,215,12 634,218,18 713,232,22 773,244,13 665,267,10 971,276,9 347,157,15 386,194,10 288,273,13 300,316,8 281,361,8 317,442,13 23,322,23 112,303,12 158,308,15 105,693,21 170,677,9 50,712,11 6,765,12 31,827,12 61,895,17 855,884,15 1055,591,15 990,650,13 1071,422,8 1102,411,8"],
 [0,800,"322,161,12 380,164,18 275,195,12 228,208,11 65,235,16 250,256,13 47,288,16 228,308,12 323,318,15 84,351,12 146,404,13 250,474,17 276,517,11 86,560,10 133,606,15 100,639,12 445,703,17 426,767,20 475,795,12 388,809,13 393,857,12 511,967,16 718,82,20 723,152,12 691,233,9 703,13,13 1022,56,15 998,15,11 1071,54,5 804,245,21 845,281,9 797,318,13 863,243,11 861,504,13 821,534,13 855,557,9 1071,553,16 1098,503,13 849,807,14 826,872,20 770,896,15 805,959,10 1007,836,16 1072,870,20 1057,914,12 1030,960,14 1093,945,14 713,1095,10 752,1121,13 749,1163,14 1050,320,4 1044,358,4 1070,385,4 5,770,22"],
 [369,820,"246,387,13 263,541,11 193,580,18 151,649,10 202,695,12 406,690,13 490,657,13 243,936,20 257,1005,13 397,1016,13 321,1075,13 392,1069,12 345,1127,20 570,890,12 593,943,14 636,998,23 635,1098,10 603,1162,18 480,1190,10 1073,326,22 1035,389,9 1100,383,12 1088,76,18 1035,119,10 1100,36,11"],
 [0,1100,"352,543,16 369,586,11 430,598,20 453,650,11 410,676,19 355,671,13 297,681,17 227,696,28 242,760,11 297,771,17 365,811,13 403,865,10 375,911,20 427,1009,16 373,1020,16 200,1009,12 149,1002,17 99,1015,12 32,637,10 936,379,10"],
 [369,1160,"765,176,15 1085,195,28 1062,375,12 1075,690,22 1030,720,15 1089,852,8 105,191,11"],
 [0,1450,"306,15,11"],
 [369,1450,"250,20,13 300,33,11 748,22,6 693,40,6 1102,32,7"]
];
document.getElementById('dots').innerHTML = dots.map(([x,y,s]) =>
  `<g transform="translate(${x} ${y}) scale(.33333)">` + s.split(' ').map(c => { const [a,b,r]=c.split(','); return `<circle cx="${a}" cy="${b}" r="${r}"/>`; }).join('') + '</g>').join('');

const moai = `<svg class="w-[22px] h-[30px] ml-[6px]" viewBox="0 0 23 32"><defs><linearGradient id="mo"><stop stop-color="#6f7163"/><stop offset=".45" stop-color="#b4b5a4"/><stop offset="1" stop-color="#66685c"/></linearGradient></defs><path d="M6 2Q13 0 20 2L22 18V30Q12 32 4 29L2 24L1 19L4 15L3 8z" fill="url(#mo)"/><path d="M4 8L13 7.500L13 10L6 11zM2 19L9 18.500L8 20.500L3 21z" fill="#34362d"/><path d="M3 24L11 23L14 18L16 10L14 22L10 28L4 28z" fill="#4c4e42"/><path d="M17 21L22 20V30L17 27z" fill="#55574b"/></svg>`;
// margin-top, bubble width, side, tail, lines [text, tracking], time, ticks
const msgs = [
 ["mt-[21.500px]","w-[169.500px]","o",1,[["Cek","tracking-[.1px]"]],"02.02","b"],
 ["mt-[20.500px]","w-[410px]","i",1,[["Address mu co kehapus","tracking-[.08px]"]],"02.03",""],
 ["mt-[21.300px]","w-[554.500px]","o",0,[["0xf42cb78d0d13e44adc85acf33155ebd10fa","tracking-[.33px]"],["2eec2","tracking-[-.15px]"]],"02.03","b"],
 ["mt-[6px]","w-[331.500px]","o",0,[["Jam <u class='no-underline border-b border-white/50'>9</u> gua tunggu","tracking-[.22px]"]],"02.04","b"],
 ["mt-[4.800px]","w-[160px]","o",1,[["Vin",""]],"09.22","b"],
 ["mt-[20.500px]","w-[219px]","i",1,[["Siap jumat","tracking-[.2px]"]],"09.23",""],
 ["mt-[21px]","w-[239px]","o",0,[["Maksunya","tracking-[-.08px]"]],"09.23","b"],
 ["mt-[5px]","w-[242.500px]","o",1,[["Jumat an?","tracking-[.12px]"]],"09.25","b"],
 ["mt-[20.500px]","w-[140.500px]","i",1,[["Yoa","tracking-[-.4px]"]],"10.00",""],
 ["mt-[21px]","w-[428px]","o",0,[["Pokoknya sehabis jumatan","tracking-[.13px]"]],"10.03","g"],
 ["mt-[5px]","w-[349px]","o",0,[["Orang mana emang","tracking-[.18px]"]],"12.56","s"],
 ["mt-[4.800px]","w-[162px]","o",0,[["Hlo","tracking-[.3px]"]],"14.29","s"],
 ["mt-[4.700px]","w-[155px]","o",0,[["Oii","tracking-[.2px]"]],"15.47","s"],
 ["mt-[4.700px]","w-[260px]","o",1,[["Refund mas","tracking-[.22px]"]],"16.53","s"],
 "Minggu",
 ["mt-[22.500px]","w-[554.500px]","o",1,[["Semoga uang yg lo ambil bisa bermanfaat ya","tracking-[.11px]"],["bagi keluarga mu aku tau lu kurang mampu","tracking-[.14px]"],["hingga berniat seperti ini&nbsp; mengambil uang","tracking-[.18px]"],["gua yg gua tabung semoga lu ga","tracking-[.13px]"],["kenapa.kenapa ya gua berdoa semoga baik","tracking-[.08px]"],["baik saja",""]],"13.22","s"]
];
const tick = {
 b:`<svg class="w-[21px] h-[15px] ml-[5px]" viewBox="0 0 21 15" fill="none" stroke="#3f9cf0" stroke-width="2.100"><path d="M1 8.500L5.500 13.200L15 1M9.500 11.500L11.300 13.200L20.300 1"/></svg>`,
 g:`<svg class="w-[21px] h-[15px] ml-[5px]" viewBox="0 0 21 15" fill="none" stroke="#7fa9a2" stroke-width="1.900"><path d="M1 8.500L5.500 13.200L15 1M9.500 11.500L11.300 13.200L20.300 1"/></svg>`,
 s:`<svg class="w-[21px] h-[15px] ml-[5px]" viewBox="0 0 21 15" fill="none" stroke="#7fa9a2" stroke-width="1.900"><path d="M1 8.500L5.500 13.200L15 1"/></svg>`, "":""
};
const chat = document.getElementById('chat');
for (const m of msgs) {
  if (m === "Minggu") { chat.insertAdjacentHTML('beforeend', `<div class="self-center shrink-0 flex items-center justify-center mt-[61.500px] w-[178px] h-[34.500px] rounded-[13px] bg-[#19191a] text-[21px] font-semibold leading-none text-[#a6a6a8]">Minggu</div>`); continue; }
  const [mt,w,side,tail,lines,time,t] = m, out = side === 'o';
  const h = lines.length === 1 ? 'h-[52.500px]' : lines.length === 2 ? 'h-[85px]' : 'h-[221.700px]';
  const tl = !tail ? '' : out
   ? `<svg class="absolute -right-[10px] bottom-0 w-[34px] h-[27px]" viewBox="0 0 34 27" fill="#005145"><path d="M24 0Q25 18 34 26.500Q22 27 15.500 23.500Q10 27 4 27L10 0z"/></svg>`
   : `<svg class="absolute -left-[10px] bottom-0 w-[34px] h-[27px]" viewBox="0 0 34 27" fill="#363638"><path d="M10 0Q9 18 0 26.500Q12 27 18.500 23.500Q24 27 30 27L24 0z"/></svg>`;
  chat.insertAdjacentHTML('beforeend', `<div class="relative shrink-0 ${mt} ${w} ${h} ${out?'self-end bg-[#005145]':'self-start bg-[#363638]'} rounded-[20px] pt-[10px] pl-[18px]">${tl}
   <div class="relative flex flex-col items-start whitespace-nowrap">${lines.map(([s,tr])=>`<div class="flex items-center h-[34px]"><span class="${tr}">${s}</span>${s.startsWith('Address')?moai:''}</div>`).join('')}</div>
   <div class="absolute right-[18px] ${out?'text-[#7fa9a2]':'text-[#98989c]'} ${lines.length===2?'bottom-[10px]':'bottom-[11.500px]'} flex items-end text-[15.500px] leading-none"><span class="h-[14px] tabular-nums tracking-[.7px] -mr-[.7px]">${time}</span>${tick[t]}</div></div>`);
}
</script>
</body>
</html>
